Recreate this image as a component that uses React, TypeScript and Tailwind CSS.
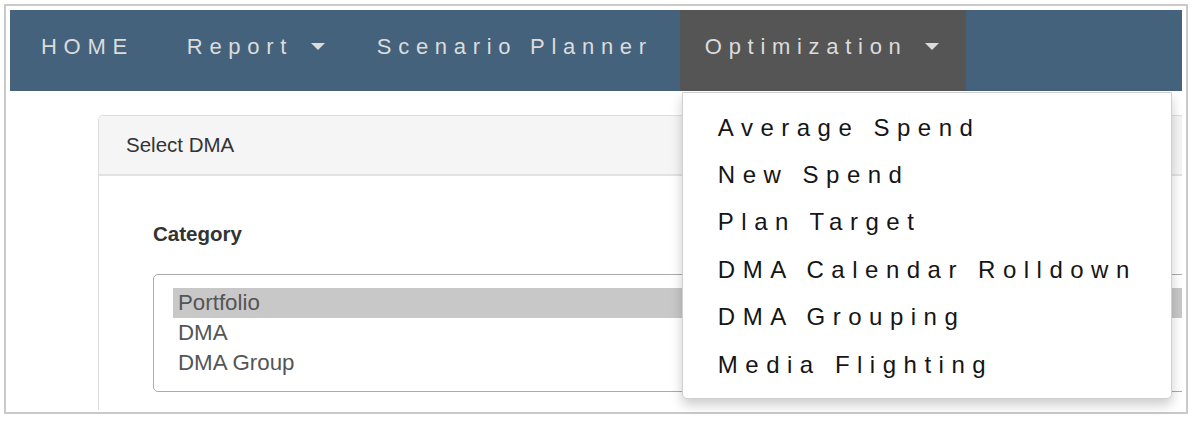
import React from 'react';

const font = { fontFamily: '"Liberation Sans", Arial, sans-serif' };

const Caret = () => (
  <span className="inline-block align-middle ml-[5px] mb-[3px] w-0 h-0 border-l-[7px] border-r-[7px] border-t-[7px] border-l-transparent border-r-transparent border-t-[#dcdcdc]" />
);

const menuItems = [
  'Average Spend',
  'New Spend',
  'Plan Target',
  'DMA Calendar Rolldown',
  'DMA Grouping',
  'Media Flighting',
];

const categories = ['Portfolio', 'DMA', 'DMA Group'];

export default function App() {
  return (
    <div className="w-[1192px] h-[421px] bg-white p-[4px]" style={font}>
      <div className="w-[1184px] h-[410px] border-2 border-[#c9c9c9] px-[4px] pt-[4px] pb-[2px] flex flex-col">
        {/* Navbar */}
        <nav className="relative z-10 h-[81px] shrink-0 bg-[#44627c] flex pl-[6px] text-[22px] tracking-[6.7px] text-[#dcdcdc] whitespace-nowrap">
          <div className="pl-[25px] pr-[28px] flex items-center pb-[9px]">HOME</div>
          <div className="pl-[25px] pr-[27px] flex items-center pb-[9px]">
            <span>
              Report <Caret />
            </span>
          </div>
          <div className="pl-[25px] pr-[27px] flex items-center pb-[9px]">Scenario Planner</div>
          <div className="relative pl-[25px] pr-[27px] flex items-center pb-[9px] bg-[#555555]">
            <span>
              Optimization <Caret />
            </span>

            {/* Dropdown */}
            <div className="absolute top-full left-[2px] mt-[1px] w-[490px] bg-white border border-[#d0d0d0] rounded-b-[5px] shadow-[0_6px_12px_rgba(0,0,0,0.2)] pt-[11px] pb-[10px] text-[24px] tracking-[7.5px] text-[#151515]">
              {menuItems.map((item) => (
                <div key={item} className="h-[47.4px] flex items-center pl-[35px]">
                  {item}
                </div>
              ))}
            </div>
          </div>
        </nav>

        {/* Content */}
        <div className="flex-1 overflow-hidden pl-[88px] pt-[24px]">
          <div className="w-[1120px] border border-[#dddddd] rounded-t-[5px] h-[400px]">
            <div className="h-[60px] bg-[#f5f5f5] border-b-2 border-[#e2e2e2] flex items-center pl-[27px] text-[20.5px] text-[#333333] rounded-t-[5px]">
              Select DMA
            </div>
            <div className="pl-[54px] pr-[20px] pt-[45px]">
              <div className="text-[20.5px] font-bold text-[#333333] leading-[26px]">Category</div>
              <div className="mt-[27px] border border-[#aaaaaa] rounded-[5px] h-[118px] pl-[19px] pt-[13px] text-[22.3px] text-[#555555]">
                {categories.map((c, i) => (
                  <div
                    key={c}
                    className={`h-[30px] flex items-center pl-[5px] ${i === 0 ? 'bg-[#c8c8c8]' : ''}`}
                  >
                    {c}
                  </div>
                ))}
              </div>
            </div>
          </div>
        </div>
      </div>
    </div>
  );
}
